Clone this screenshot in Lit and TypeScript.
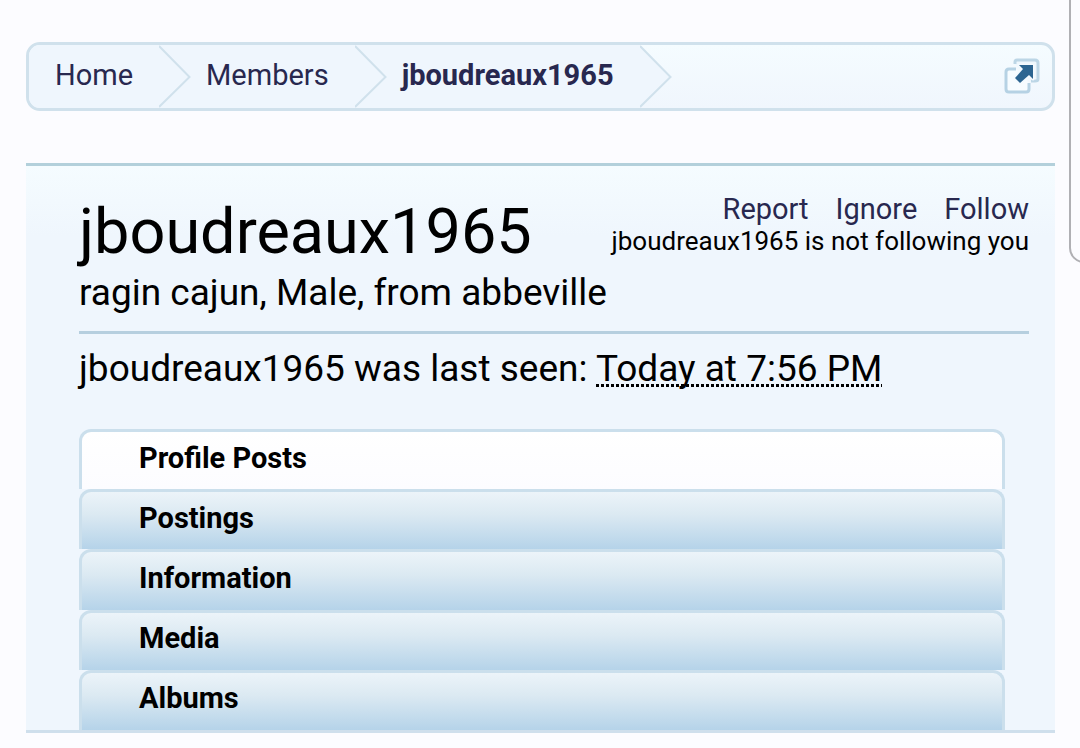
import { LitElement, html, css, svg } from "lit";
import { customElement, state } from "lit/decorators.js";

const crumbs = ["Home", "Members", "jboudreaux1965"];
const actions = ["Report", "Ignore", "Follow"];
const tabs = ["Profile Posts", "Postings", "Information", "Media", "Albums"];

@customElement("app-root")
export class AppRoot extends LitElement {
  @state() private selected = 0;

  static styles = css`
    :host {
      display: block;
      position: relative;
      box-sizing: border-box;
      min-height: 100vh;
      padding: 42px 25px 15px 26px;
      overflow: hidden;
      background: #fcfcff;
      color: #000;
      font-family: Roboto, sans-serif;
      font-size: 29px;
    }
    * {
      box-sizing: border-box;
    }
    a {
      color: #28284f;
      text-decoration: none;
    }
    .trail {
      display: flex;
      align-items: center;
      justify-content: space-between;
      height: 69px;
      border: 3px solid #d0e1ec;
      border-radius: 14px;
      overflow: hidden;
      background: linear-gradient(#f5fcff, #f0f6fd);
    }
    .crumbs {
      display: flex;
      height: 100%;
      margin: 0;
      padding: 0;
      list-style: none;
    }
    .crumb {
      display: flex;
      background: #eff6fd;
    }
    .crumb:last-child {
      background: linear-gradient(to right, #eff6fd calc(100% - 32px), transparent 0);
    }
    .crumb a {
      padding: 0 26px 0 15px;
      line-height: 61px;
    }
    .crumb:first-child a {
      padding-left: 26px;
    }
    .crumb:last-child a {
      font-weight: 700;
    }
    .arrow {
      display: block;
      width: 32px;
      height: 63px;
    }
    .jump {
      display: flex;
      margin: 0 12px 2px 0;
      padding: 0;
      border: 0;
      background: none;
    }
    .panel {
      margin-top: 52px;
      padding: 27px 26px 0 53px;
      border-top: 3px solid #b3d0db;
      border-bottom: 3px solid #cfdfec;
      background: linear-gradient(#f5fcff, #eff6fd 70px);
    }
    .head {
      display: flex;
      justify-content: space-between;
      border-bottom: 3px solid #b6cfdf;
      padding-bottom: 15px;
    }
    .name {
      margin: 0;
      font-size: 63px;
      font-weight: 400;
      line-height: 77px;
    }
    .blurb,
    .seen {
      margin: 0;
      font-size: 37px;
      line-height: 46px;
    }
    .side {
      text-align: right;
    }
    .actions {
      display: flex;
      justify-content: flex-end;
      gap: 27px;
      line-height: 32px;
    }
    .status {
      margin: 0;
      font-size: 26px;
      line-height: 32px;
    }
    .seen {
      margin-top: 12px;
    }
    .date {
      background: repeating-linear-gradient(to right, #000 0 3px, transparent 3px 5px)
        0 calc(100% - 3px) / 100% 3px no-repeat;
    }
    .tabs {
      display: grid;
      grid-auto-rows: 1fr;
      min-height: 301px;
      margin: 37px 24px 0 0;
    }
    .tab {
      padding: 0 57px 6px;
      border: 3px solid #cbdfec;
      border-bottom: 0;
      border-radius: 12px 12px 0 0;
      background: linear-gradient(#ecf4f9, #dbe9f2 40%, #b5d3e9);
      color: inherit;
      font: 700 29px Roboto, sans-serif;
      text-align: left;
    }
    .tab.on {
      background: linear-gradient(#fff, #fcfcff);
    }
    .drawer {
      position: absolute;
      top: -20px;
      left: calc(100% - 11px);
      width: 60px;
      height: 283px;
      border: 2px solid #b0b0b4;
      border-radius: 15px;
      background: #fcfcff;
    }
  `;

  private arrow() {
    return svg`<svg class="arrow" viewBox="0 0 32 63" aria-hidden="true">
      <path d="M0 0L31 32L0 63Z" fill="#eff6fd" />
      <path d="M0 1L30.500 32L0 62" fill="none" stroke="#d0e1ec" stroke-width="2" />
    </svg>`;
  }

  render() {
    return html`
      <nav class="trail" aria-label="Breadcrumb">
        <ol class="crumbs">
          ${crumbs.map((c) => html`<li class="crumb"><a href="#">${c}</a>${this.arrow()}</li>`)}
        </ol>
        <button class="jump" aria-label="Open quick navigation">
          <svg width="36" height="36" viewBox="0 0 36 36" aria-hidden="true">
            <path d="M11 6V4Q11 2 13 2H31Q34 2 34 5V21Q34 23 31 23H27" fill="#eef7fd" stroke="#bcd6e6" stroke-width="3" />
            <path d="M12 11H5Q2 11 2 14V31Q2 34 5 34H22Q25 34 25 31V25" fill="#f7fcff" stroke="#b6d2e4" stroke-width="3" />
            <path d="M15 7H29V21L25 17L16 25L11 20L19 11Z" fill="#2c6591" stroke="#f4fafe" stroke-width="3" paint-order="stroke" stroke-linejoin="round" />
          </svg>
        </button>
      </nav>
      <main class="panel">
        <header class="head">
          <div>
            <h1 class="name">jboudreaux1965</h1>
            <p class="blurb">ragin cajun, Male, from abbeville</p>
          </div>
          <div class="side">
            <div class="actions">${actions.map((a) => html`<a href="#">${a}</a>`)}</div>
            <p class="status">jboudreaux1965 is not following you</p>
          </div>
        </header>
        <p class="seen">jboudreaux1965 was last seen: <span class="date">Today at 7:56 PM</span></p>
        <div class="tabs" role="tablist">
          ${tabs.map(
            (t, i) => html`<button
              class="tab ${i === this.selected ? "on" : ""}"
              role="tab"
              aria-selected=${i === this.selected}
              @click=${() => (this.selected = i)}
            >${t}</button>`
          )}
        </div>
      </main>
      <div class="drawer"></div>
    `;
  }
}
